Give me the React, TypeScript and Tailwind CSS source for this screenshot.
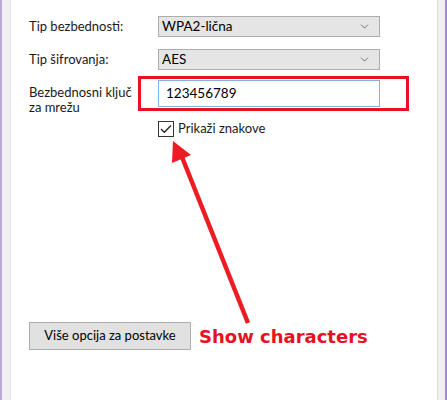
import { ChevronDown } from 'lucide-react';

const font = { fontFamily: '"Segoe UI", Lato, "Noto Sans", sans-serif' };

const Select = ({ value }: { value: string }) => (
  <div className="flex h-[21px] w-[222px] items-center justify-between border border-[#adadad] bg-[#e5e5e5] pl-[3px] pr-[8px] text-[13.5px] text-black">
    <span>{value}</span>
    <ChevronDown size={13} strokeWidth={1.3} className="text-[#444]" />
  </div>
);

const App = () => {
  return (
    <div className="relative flex h-[400px] w-[447px] overflow-hidden bg-white" style={font}>
      <div className="w-[2px] bg-[#b9a9da]" />
      <div className="w-[8px] bg-[#f0f0f0]" />
      <div className="w-[1px] bg-[#e3e3e3]" />

      <div className="flex flex-1 flex-col bg-white pl-[18px] pt-[16px] text-[13px] text-[#1a1a1a]">
        <div className="flex items-center">
          <span className="w-[129px]">Tip bezbednosti:</span>
          <Select value="WPA2-lična" />
        </div>

        <div className="mt-[12px] flex items-center">
          <span className="w-[129px]">Tip šifrovanja:</span>
          <Select value="AES" />
        </div>

        <div className="mt-[10px] flex items-start">
          <span className="w-[129px] pt-[5px] leading-[15px]">
            Bezbednosni ključ
            <br />
            za mrežu
          </span>
          <div className="relative">
            <div className="flex h-[27px] w-[222px] items-center border border-[#7eb4ea] bg-white pl-[7px] text-[13.5px] text-black">
              123456789
            </div>
            <div className="pointer-events-none absolute left-[-20px] top-[-4px] h-[35px] w-[271px] border-[3px] border-[#e81123]" />
          </div>
        </div>

        <div className="mt-[4px] flex items-center pl-[129px]">
          <div className="flex h-[16px] w-[16px] items-center justify-center border border-[#333] bg-white">
            <svg width="12" height="10" viewBox="0 0 12 10">
              <path d="M1 5 L4.3 8.3 L11 1.5" fill="none" stroke="#222" strokeWidth="1.3" />
            </svg>
          </div>
          <span className="ml-[4px]">Prikaži znakove</span>
        </div>

        <div className="mt-auto mb-[50px] flex items-center">
          <button className="h-[28px] w-[162px] border border-[#adadad] bg-[#e1e1e1] text-[13px] text-black">
            Više opcija za postavke
          </button>
          <span
            className="ml-[8px] text-[18px] font-bold text-[#e81123]"
            style={{ fontFamily: '"DejaVu Sans", Verdana, sans-serif' }}
          >
            Show characters
          </span>
        </div>
      </div>

      <div className="w-[1px] bg-[#dcdcdc]" />
      <div className="w-[7px] bg-[#f0f0f0]" />
      <div className="w-[2px] bg-[#9d89d3]" />

      <svg className="pointer-events-none absolute left-0 top-0" width="447" height="400">
        <line x1="248" y1="323" x2="182" y2="157" stroke="#ed1c24" strokeWidth="4.5" />
        <polygon points="173,141 172,163 191,155" fill="#ed1c24" />
      </svg>
    </div>
  );
};

export default App;
